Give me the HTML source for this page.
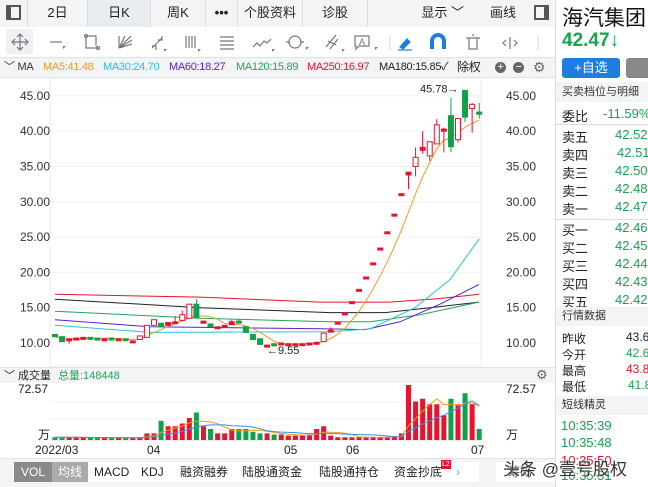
<!DOCTYPE html>
<html><head><meta charset="utf-8"><style>
*{margin:0;padding:0;box-sizing:border-box}
body{width:648px;height:487px;overflow:hidden;background:#fff;font-family:"Liberation Sans","Noto Sans CJK SC",sans-serif;position:relative;color:#222}
.a{position:absolute}
.tab{position:absolute;top:0;height:27px;line-height:26px;font-size:13px;text-align:center;border-right:1px solid #ddd;background:#f3f4f6}
.rl{position:absolute;left:562px;font-size:13px}
.rv{position:absolute;left:615px;font-size:13px;color:#1aa14f}
.ma span{position:absolute}
</style></head><body>
<div class="a" style="left:0;top:0;width:555px;height:27px;background:#f3f4f6;border-bottom:1px solid #ddd"></div>
<div class="tab" style="left:0;width:28px"><span style="display:inline-block;width:15px;height:15px;border:2px solid #555;margin-top:5px;border-left-width:5px"></span></div>
<div class="tab" style="left:28px;width:60px">2日</div>
<div class="tab" style="left:88px;width:63px;background:#e9ecf0">日K</div>
<div class="tab" style="left:151px;width:55px">周K</div>
<div class="tab" style="left:206px;width:32px;font-weight:bold">•••</div>
<div class="tab" style="left:238px;width:65px">个股资料</div>
<div class="tab" style="left:303px;width:65px">诊股</div>
<div class="tab" style="left:368px;width:110px;text-align:right;padding-right:14px;border:none">显示 ﹀</div>
<div class="tab" style="left:478px;width:50px;border:none">画线</div>
<div class="tab" style="left:528px;width:27px;border:none"><span style="display:inline-block;width:15px;height:15px;border:2px solid #555;margin-top:5px;border-right-width:5px"></span></div>
<div class="a" style="left:0;top:27px;width:555px;height:31px;background:#fff;border-bottom:1px solid #e2e2e2"></div>
<div class="a" style="left:6px;top:29px;width:27px;height:25px;background:#eef0f3"></div>
<svg class="a" style="left:0;top:27px" width="555" height="31" stroke="#777" fill="none" stroke-width="1.2">
<path d="M12 15h16M20 7v16M17 10l3-3 3 3M17 20l3 3 3-3M15 12l-3 3 3 3M25 12l3 3-3 3"/>
<path d="M50 15h12"/><path d="M86 9h10v10M86 9v12h12" /><circle cx="86" cy="9" r="1.5"/><circle cx="98" cy="21" r="1.5"/>
<path d="M119 21l12-12M119 21l13-8M119 21l13-4M119 21v-12M119 21l6-12"/>
<path d="M152 21l10-10M152 19h4v4M158 13h4v-4"/>
<path d="M186 9v12M189 9v12M192 9v12M195 9v12"/>
<path d="M220 10h14M220 14h14M220 18h14M220 22h14"/>
<path d="M253 20l4-4 3 3 4-5 3 2 4-4"/>
<circle cx="295" cy="15" r="6"/><path d="M286 15h4M300 15h4"/>
<path d="M326 20l10-12M328 14l8 4M330 22l8-10"/>
<path d="M355 9h14v10h-10l-3 3v-3h-1z"/><text x="359" y="18" font-size="9" fill="#777" stroke="none">A</text>
<path d="M390 9v14" stroke="#ddd"/>
<path d="M400 20l7-8 3 3-7 7z" fill="#1e7de0" stroke="#1e7de0"/><path d="M398 23h14" stroke="#1e7de0"/>
<path d="M432 22v-8a6 6 0 0 1 12 0v8" stroke="#1e7de0" stroke-width="4"/>
<path d="M466 11h14M469 11v11h8v-11M472 8h2" />
<path d="M510 10v12M506 13l-3 3 3 3M514 13l3 3-3 3"/>
<path d="M538 9v14" stroke="#ddd"/>
<g fill="#777" stroke="none"><path d="M63 19l3 0-3 3z M164 22l3 0-3 3zM198 22l3 0-3 3zM272 22l3 0-3 3zM306 20l3 0-3 3zM342 22l3 0-3 3zM375 20l3 0-3 3z"/></g>
</svg>
<div class="a ma" style="left:0;top:58px;width:555px;height:20px;background:#f3f4f6;border-bottom:1px solid #e2e2e2;font-size:11px;line-height:19px;white-space:nowrap;letter-spacing:-0.3px">
<span style="left:4px;color:#333">﹀ MA</span>
<span style="left:43px;color:#f39b1d">MA5:41.48</span>
<span style="left:103px;color:#2bc4d8">MA30:24.70</span>
<span style="left:169px;color:#5a20d8">MA60:18.27</span>
<span style="left:236px;color:#1fa65a">MA120:15.89</span>
<span style="left:307px;color:#e8132f">MA250:16.97</span>
<span style="left:379px;color:#222">MA180:15.85✓</span>
<span style="left:457px;color:#222;font-size:12px">除权</span>
<span style="left:495px;top:4px;width:11px;height:11px;border-radius:50%;background:#666;color:#fff;font-size:11px;line-height:11px;text-align:center">+</span>
<span style="left:513px;top:4px;width:11px;height:11px;border-radius:50%;background:#666;color:#fff;font-size:11px;line-height:10px;text-align:center">−</span>
<span style="left:533px;color:#666;font-size:14px">⚙</span>
</div>
<svg id="ch" class="a" style="left:0;top:78px" width="555" height="409"></svg>
<div class="a" style="left:0;top:367px;width:555px;height:16px;background:#f3f4f6;font-size:11px;line-height:16px;border-top:1px solid #e2e2e2">
<span style="position:absolute;left:4px">﹀ 成交量</span><span style="position:absolute;left:58px;color:#1fa65a">总量:148448</span>
<span style="position:absolute;left:536px;color:#666;font-size:13px;top:-1px">⚙</span></div>
<div class="a" style="left:0;top:458px;width:555px;height:29px;background:#f3f4f6;border-top:1px solid #e2e2e2"></div>
<div class="a" style="left:14px;top:462px;width:465px;height:20px;background:#fff;font-size:12px;line-height:20px;white-space:nowrap">
<span style="position:absolute;left:0;width:38px;background:#8a8a8a;color:#fff;text-align:center">VOL</span>
<span style="position:absolute;left:38px;width:36px;background:#aaa;color:#fff;text-align:center">均线</span>
<span style="position:absolute;left:80px">MACD</span><span style="position:absolute;left:127px">KDJ</span>
<span style="position:absolute;left:166px">融资融券</span><span style="position:absolute;left:228px">陆股通资金</span>
<span style="position:absolute;left:305px">陆股通持仓</span><span style="position:absolute;left:380px">资金抄底</span>
<span style="position:absolute;left:427px;top:-2px;font-size:7px;line-height:9px;background:#e8132f;color:#fff;padding:0 1px">L2</span>
<span style="position:absolute;left:442px;color:#999">›</span></div>
<div class="a" style="left:496px;top:462px;width:60px;height:20px;background:#fff;font-size:12px;line-height:20px;padding-left:12px">筹码</div>
<div class="a" style="left:555px;top:0;width:93px;height:487px;background:#fff;border-left:1px solid #ddd"></div>
<div class="a" style="left:562px;top:2px;font-size:21px;color:#111">海汽集团</div>
<div class="a" style="left:562px;top:30px;font-size:19px;color:#1aa14f;font-weight:bold">42.47↓</div>
<div class="a" style="left:562px;top:58px;width:58px;height:20px;background:#1e7de0;border-radius:3px;color:#fff;font-size:13px;line-height:20px;text-align:center">+自选</div>
<div class="a" style="left:626px;top:58px;width:30px;height:20px;background:#888;border-radius:3px"></div>
<div class="a" style="left:556px;top:82px;width:92px;height:20px;background:#f3f4f6;font-size:11px;line-height:20px;padding-left:6px;color:#333">买卖档位与明细</div>
<div class="rl" style="top:106px">委比</div><div class="rv" style="top:106px;left:603px">-11.59%</div>
<div class="a" style="left:556px;top:124px;width:92px;border-top:1px solid #ddd"></div>
<div class="a" style="left:556px;top:219px;width:92px;border-top:1px solid #ddd"></div>
<div class="rl" style="top:127px">卖五</div><div class="rv" style="top:127px">42.52</div>
<div class="rl" style="top:145px">卖四</div><div class="rv" style="top:145px;left:617px">42.51</div>
<div class="rl" style="top:163px">卖三</div><div class="rv" style="top:163px">42.50</div>
<div class="rl" style="top:181px">卖二</div><div class="rv" style="top:181px">42.48</div>
<div class="rl" style="top:199px">卖一</div><div class="rv" style="top:199px">42.47</div>
<div class="rl" style="top:220px">买一</div><div class="rv" style="top:220px">42.46</div>
<div class="rl" style="top:238px">买二</div><div class="rv" style="top:238px">42.45</div>
<div class="rl" style="top:256px">买三</div><div class="rv" style="top:256px">42.44</div>
<div class="rl" style="top:274px">买四</div><div class="rv" style="top:274px">42.43</div>
<div class="rl" style="top:292px">买五</div><div class="rv" style="top:292px">42.42</div>
<div class="a" style="left:556px;top:307px;width:92px;height:19px;background:#f3f4f6;font-size:11px;line-height:19px;padding-left:6px;color:#333">行情数据</div>
<div class="rl" style="top:330px;font-size:12px">昨收</div><div class="rv" style="top:330px;left:626px;color:#222;font-size:12px">43.6</div>
<div class="rl" style="top:346px;font-size:12px">今开</div><div class="rv" style="top:346px;left:626px;font-size:12px">42.6</div>
<div class="rl" style="top:362px;font-size:12px">最高</div><div class="rv" style="top:362px;left:626px;color:#e8132f;font-size:12px">43.8</div>
<div class="rl" style="top:378px;font-size:12px">最低</div><div class="rv" style="top:378px;left:628px;font-size:12px">41.8</div>
<div class="a" style="left:556px;top:396px;width:92px;height:19px;background:#f3f4f6;font-size:11px;line-height:19px;padding-left:6px;color:#333">短线精灵</div>
<div class="a" style="left:561px;top:418px;font-size:13px;color:#1aa14f">10:35:39</div>
<div class="a" style="left:561px;top:435px;font-size:13px;color:#1aa14f">10:35:48</div>
<div class="a" style="left:561px;top:453px;font-size:13px;color:#e8132f">10:35:50</div>
<div class="a" style="left:561px;top:468px;font-size:13px;color:#1aa14f">10:35:51</div>
<div class="a" style="left:503px;top:455px;font-size:17px;color:#333;text-shadow:0 0 2px #fff">头条 @壹号股权</div>
<script>
var R='#e8132f',G='#12a14a';
var s=document.getElementById('ch'),h='';
function Y(p){return 343-78-(p-10)*7.06}
function X(i){return 55+i*7.07}
h+='<rect x="50" y="0" width="431" height="288" fill="none" stroke="#eee"/>';
[45,40,35,30,25,20,15,10].forEach(function(p){var y=Y(p);h+='<line x1="50" x2="481" y1="'+y+'" y2="'+y+'" stroke="#f0f0f0"/>';
h+='<text x="20" y="'+(y+4)+'" font-size="12" fill="#333">'+p.toFixed(2)+'</text><text x="506" y="'+(y+4)+'" font-size="12" fill="#333">'+p.toFixed(2)+'</text>';});
var d=[[11.2,10.9],[10.9,10.2],[10.3,10.6,10.7,9.9],[10.6,10.7],[10.6,10.8],[10.8,10.7],[10.7,10.6],[10.5,10.6],[10.7,10.6],[10.5,10.6],[10.6,10.4],[10.1,10.3],[10.5,11.0],[10.8,12.5],[12.5,13.3],[12.8,12.3],[12.5,12.9],[12.8,13.0,13.8],[13.2,14.0,14.6],[13.5,15.5],[15.5,13.6,16.2],[12.8,13.1],[12.7,12.3],[12.1,12.3],[12.3,12.5],[12.6,13.0,13.3],[13.1,12.8,13.4],[12.3,11.5],[11.2,10.5],[10.6,9.8],[9.6,9.7,9.8,9.55],[9.9,9.6],[9.9,10.0],[9.8,9.9],[9.8,9.9],[9.8,9.9],[9.9,10.0],[10.0,10.1],[10.2,11.4],[11.8,11.82,12.2,11.5],
[12.85,12.95],[14.15,14.25],[15.75,15.85],[17.5,17.6],[19.25,19.35],[21.25,21.35],[23.35,23.45],[25.65,25.75],[28.15,28.25],[31.05,31.15],[33.8,34.2,34.2,31.8],[35,36.3,37.7,33.6],[37.3,37.7,40,36.8],[36.5,38.5,38.5,35.8],[38.2,40.9,41.7,38.2],[40,40.3,40.5,37],[42.2,37.8,44.7,37],[38.8,41.8,41.8,38.4],[45.78,42,45.78,41.3],[43.2,43.8,44,39.8],[42.7,42.4,44,41.8]];
var lines=[['#e8132f',[[55,16.9],[200,16.5],[320,15.8],[390,15.8],[440,16.3],[479,16.9]]],
['#222',[[55,16.2],[200,15],[330,14.3],[385,14.3],[430,15],[479,15.8]]],
['#1fa65a',[[55,14.5],[200,13.5],[330,13],[370,13],[420,14],[479,15.8]]],
['#5a20d8',[[55,13.3],[150,12.3],[330,12],[365,11.9],[400,13],[440,15.5],[479,18.3]]],
['#2bc4d8',[[55,12.5],[150,11.5],[330,11.6],[370,12],[415,15],[450,19],[479,24.7]]]];
function pl(c,pts){return '<polyline fill="none" stroke="'+c+'" stroke-width="1" points="'+pts.map(function(q){return q[0]+','+Y(q[1]).toFixed(1)}).join(' ')+'"/>'}
lines.forEach(function(l){h+=pl(l[0],l[1])});
var m=[];for(var i=0;i<d.length;i++){var sm=0,n=0;for(var j=Math.max(0,i-4);j<=i;j++){sm+=d[j][1];n++}m.push([X(i),sm/n])}
h+=pl('#f39b1d',m);
d.forEach(function(c,i){var o=c[0],cl=c[1],hi=c[2]||Math.max(o,cl),lo=c[3]||Math.min(o,cl);var up=cl>=o,col=up?R:G,x=X(i);
h+='<line x1="'+x+'" x2="'+x+'" y1="'+Y(hi)+'" y2="'+Y(lo)+'" stroke="'+col+'"/>';
var t=Y(Math.max(o,cl)),b=Y(Math.min(o,cl));if(b-t<1.5)b=t+2;
h+='<rect x="'+(x-2.5)+'" y="'+t+'" width="5" height="'+(b-t)+'" fill="'+(up&&b-t>3?'#fff':col)+'" stroke="'+col+'" stroke-width="1"/>';});
h+='<text x="420" y="'+(Y(45.78)+2)+'" font-size="11" fill="#222">45.78→</text><text x="267" y="'+(Y(9.55)+8)+'" font-size="11" fill="#222">←9.55</text>';
var vt=385-78,vb=440-78;
h+='<line x1="50" x2="481" y1="'+vb+'" y2="'+vb+'" stroke="#ddd"/>';
[vt+17,vt+34].forEach(function(y){h+='<line x1="50" x2="481" y1="'+y+'" y2="'+y+'" stroke="#f0f0f0"/>'});
h+='<text x="18" y="'+(vt+8)+'" font-size="12" fill="#222">72.57</text><text x="506" y="'+(vt+8)+'" font-size="12" fill="#222">72.57</text><text x="38" y="'+(vb-1)+'" font-size="12" fill="#222">万</text><text x="506" y="'+(vb-1)+'" font-size="12" fill="#222">万</text>';
var v=[.05,.05,.05,.05,.04,.04,.04,.04,.04,.04,.04,.04,.05,.12,.12,.35,.25,.25,.3,.4,.5,.25,.2,.12,.12,.2,.2,.2,.15,.12,.12,.1,.1,.08,.08,.08,.1,.2,.25,.08,.05,.05,.05,.05,.05,.05,.05,.05,.07,.12,1,.7,.75,.65,.65,.45,.75,.65,.85,.65,.2];
v.forEach(function(q,i){var c=d[i]||[0,1];var up=c[1]>=c[0];var x=X(i),hh=q*(vb-vt);h+='<rect x="'+(x-2.5)+'" y="'+(vb-hh)+'" width="5" height="'+hh+'" fill="'+(up?R:G)+'"/>';});
function vl(n,c){var p=[];for(var i=0;i<v.length;i++){var sm=0,k=0;for(var j=Math.max(0,i-n+1);j<=i;j++){sm+=v[j];k++}p.push(X(i)+','+(vb-sm/k*(vb-vt)).toFixed(1))}h+='<polyline fill="none" stroke="'+c+'" points="'+p.join(' ')+'"/>'}
vl(5,'#f39b1d');vl(10,'#3a8ee6');
h+='<g font-size="12" fill="#222"><text x="35" y="'+(vb+14)+'">2022/03</text><text x="147" y="'+(vb+14)+'">04</text><text x="284" y="'+(vb+14)+'">05</text><text x="346" y="'+(vb+14)+'">06</text><text x="471" y="'+(vb+14)+'">07</text></g>';
s.innerHTML=h;
</script>
</body></html>
